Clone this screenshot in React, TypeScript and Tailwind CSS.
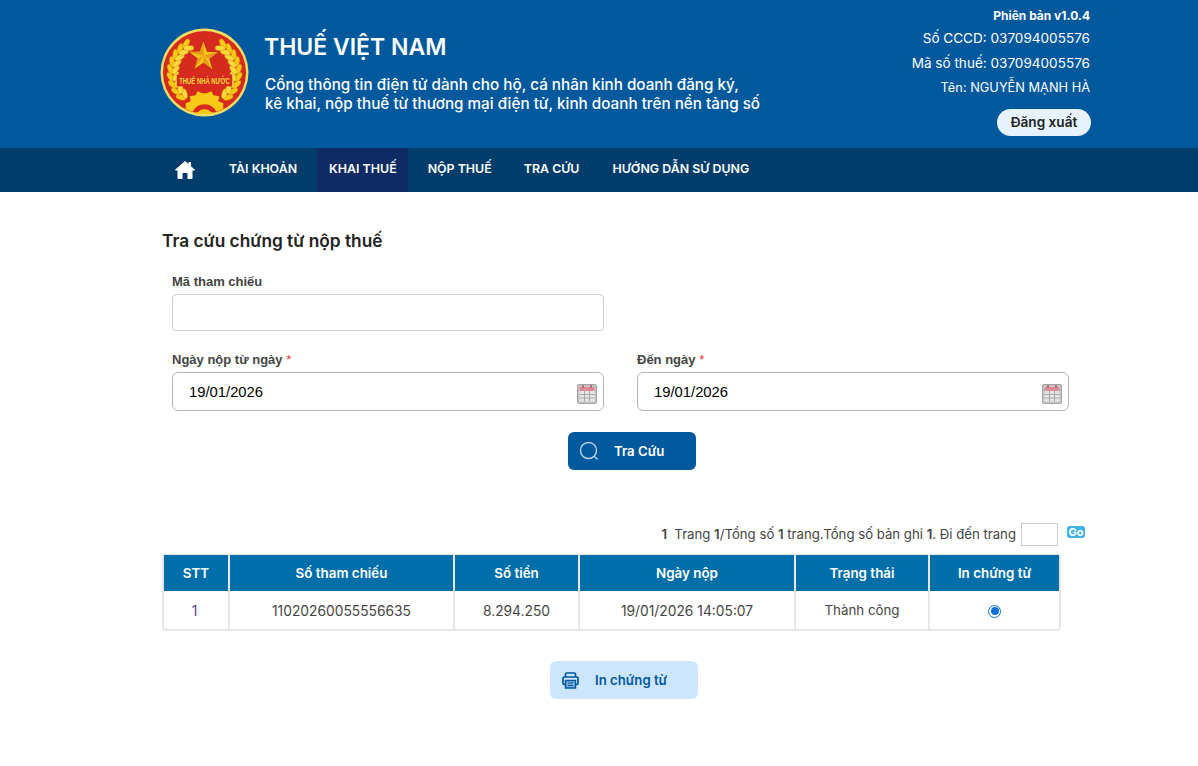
import React from 'react';

// wreath leaves: t is the angle round the emblem, 0 = bottom, 180 = top
const leafAngles = [46, 59, 72, 85, 98, 111, 124, 137, 150];

const WreathSide = () => (
  <g>
    {leafAngles.map((t) => {
      const rad = (t * Math.PI) / 180;
      const x = 45 - 32 * Math.sin(rad);
      const y = 45 + 32 * Math.cos(rad);
      const r = t - 90;
      return (
        <g key={t}>
          <ellipse cx={x} cy={y} rx="2.600" ry="5.200" fill="#f6c915" stroke="#c98a12" strokeWidth="0.4" transform={`rotate(${r - 28} ${x} ${y}) translate(-3 0)`} />
          <ellipse cx={x} cy={y} rx="2.600" ry="5.200" fill="#f9d93a" stroke="#c98a12" strokeWidth="0.4" transform={`rotate(${r + 28} ${x} ${y}) translate(3 0)`} />
        </g>
      );
    })}
  </g>
);

const Emblem = () => (
  <svg width="89" height="89" viewBox="0 0 90 90" className="shrink-0">
    <circle cx="45" cy="45" r="44.500" fill="#f3dc62" />
    <circle cx="45" cy="45" r="42" fill="#d62a1e" />
    <WreathSide />
    <g transform="translate(90 0) scale(-1 1)">
      <WreathSide />
    </g>
    <path d="M44 13 L47.800 23.700 L59.200 24.100 L50.200 31 L53.400 41.900 L44 35.500 L34.600 41.900 L37.800 31 L28.800 24.100 L40.200 23.700 Z" fill="#f6c518" stroke="#b51f17" strokeWidth="0.7" />
    <path d="M44 13 L44 28 L28.800 24.100 L40.200 23.700 Z M44 28 L59.200 24.100 L50.200 31 Z M44 28 L53.400 41.900 L44 35.500 Z M44 28 L34.600 41.900 L37.800 31 Z" fill="#e59a17" />
    <rect x="17" y="47" width="56" height="12" fill="#d62a1e" />
    <text textAnchor="middle" fontSize="8.800" fontWeight="700" fill="#f8d83a" fontFamily="Liberation Sans, sans-serif" transform="translate(45 56.500) scale(0.68 1)">THUẾ NHÀ NƯỚC</text>
    <path d="M26 82 L26 76 L31 74 L30 69 L36 68 L38 64 L43 66 L47 66 L52 64 L54 68 L60 69 L59 74 L64 76 L64 82 A44 44 0 0 1 26 82 Z" fill="#f6c915" />
    <path d="M33 85 A13 13 0 0 1 57 85 Z" fill="#d62a1e" />
    <path d="M37 87 A9 9 0 0 1 53 87 Z" fill="#f6c915" />
  </svg>
);

const HomeIcon = () => (
  <svg width="20" height="18" viewBox="0 0 20 18" fill="white">
    <path d="M10 0 L13.500 3 V1 H16 V5.200 L20 8.800 Q20 9.600 19 9.600 H17.500 V17 Q17.500 18 16.500 18 H12.500 V12 H7.500 V18 H3.500 Q2.500 18 2.500 17 V9.600 H1 Q0 9.600 0 8.800 Z" />
  </svg>
);

const Calendar = () => (
  <svg width="20" height="20" viewBox="0 0 20 20" className="mt-[4px] shrink-0">
    <rect x="0.500" y="0.500" width="19" height="19" rx="1.500" fill="#c4c4c4" stroke="#a3a3a3" />
    <rect x="2.500" y="3" width="15" height="4" fill="#dd8b98" />
    <rect x="2.500" y="7" width="15" height="10.500" fill="#e6e6e6" />
    <path d="M2.500 10.500h15M2.500 14h15M7.500 7v10.500M12.500 7v10.500" stroke="#a8a8a8" strokeWidth="1" />
    <path d="M6 1v3M14 1v3" stroke="#c2505f" strokeWidth="1.500" />
  </svg>
);

const Printer = () => (
  <svg width="17" height="17" viewBox="0 0 17 17" fill="none" stroke="#00589d" className="shrink-0">
    <path d="M3.500 5V2A1.200 1.200 0 0 1 4.700 1h7.600a1.200 1.200 0 0 1 1.200 1V5" strokeWidth="1.600" />
    <path d="M3.500 12.500H2.200A1.400 1.400 0 0 1 1 11V6.500A1.400 1.400 0 0 1 2.400 5h12.200A1.400 1.400 0 0 1 16 6.500V11a1.400 1.400 0 0 1-1.200 1.500H13.500" strokeWidth="1.700" />
    <rect x="3.500" y="8.500" width="10" height="7.500" strokeWidth="1.500" fill="#7fb2da" />
    <path d="M5.800 11h5.400M5.800 13.500h5.400" strokeWidth="1.200" />
  </svg>
);

const DateField = ({ label }: { label: string }) => (
  <div className="w-[432px]">
    <div className="pt-[1px] text-[13px] leading-[16px] font-bold text-[#444] font-['Liberation_Sans',sans-serif]">
      {label} <span className="text-[#d33] font-normal">*</span>
    </div>
    <div className="mt-[4px] flex h-[39px] items-center justify-between rounded-md border border-[#b5b5b5] pl-[16px] pr-[6px]">
      <span className="pt-[1px] text-[14.800px] text-black font-['Liberation_Sans',sans-serif]">19/01/2026</span>
      <Calendar />
    </div>
  </div>
);

const columns = [
  { title: 'STT', value: '1', w: 'w-[66px]', cell: 'pr-[3px] text-[#5a3f86]' },
  { title: 'Số tham chiếu', value: '11020260055556635', w: 'w-[225px]', cell: 'text-[#444]' },
  { title: 'Số tiền', value: '8.294.250', w: 'w-[125px]', cell: 'text-[#444]' },
  { title: 'Ngày nộp', value: '19/01/2026 14:05:07', w: 'w-[216px]', cell: 'text-[#444]' },
  { title: 'Trạng thái', value: 'Thành công', w: 'w-[134px]', cell: 'text-[13.300px] text-[#444]' },
];

const App: React.FC = () => {
  return (
    <div className="h-[766px] w-[1198px] overflow-hidden bg-white font-['Inter',sans-serif]">
      <header className="h-[148px] bg-[#00589d] text-white">
        <div className="ml-[160px] flex w-[930px] justify-between">
          <div className="flex pt-[28px]">
            <Emblem />
            <div className="ml-[16px]">
              <h1 className="mt-[4px] -ml-[1px] text-[23px] leading-[30px] font-semibold">THUẾ VIỆT NAM</h1>
              <p className="mt-[13px] text-[15.250px] leading-[19px] font-medium">
                Cổng thông tin điện tử dành cho hộ, cá nhân kinh doanh đăng ký,<br />
                kê khai, nộp thuế từ thương mại điện tử, kinh doanh trên nền tảng số
              </p>
            </div>
          </div>
          <div className="flex flex-col items-end pt-[7px] text-[13.550px]">
            <div className="text-[12px] leading-[18px] font-bold">Phiên bản v1.0.4</div>
            <div className="mt-[3px] leading-[20px]">Số CCCD: 037094005576</div>
            <div className="mt-[5px] leading-[20px]">Mã số thuế: 037094005576</div>
            <div className="mt-[5px] text-[12.800px] leading-[20px]">Tên: NGUYỄN MẠNH HÀ</div>
            <button className="mt-[11px] -mr-[1px] h-[27px] w-[94px] rounded-full bg-[#e6f2fd] text-[13.600px] font-semibold text-[#222]">Đăng xuất</button>
          </div>
        </div>
      </header>

      <nav className="flex h-[44px] items-center bg-[#003d6b] pl-[162px] text-[12.400px] font-semibold text-white">
        <div className="flex h-full w-[55px] items-center pb-[1px] pl-[13px]">
          <HomeIcon />
        </div>
        <div className="flex h-full items-center px-[12px] pb-[1px]">TÀI KHOẢN</div>
        <div className="ml-[8px] flex h-full items-center bg-[#0e2c63] pl-[12px] pr-[11px] pb-[1px]">KHAI THUẾ</div>
        <div className="ml-[8px] flex h-full items-center px-[12px] pb-[1px]">NỘP THUẾ</div>
        <div className="ml-[8px] flex h-full items-center px-[12px] pb-[1px]">TRA CỨU</div>
        <div className="ml-[9px] flex h-full items-center px-[12px] pb-[1px]">HƯỚNG DẪN SỬ DỤNG</div>
      </nav>

      <main className="pl-[162px]">
        <h2 className="mt-[38px] text-[17.300px] leading-[22px] font-semibold text-[#222]">Tra cứu chứng từ nộp thuế</h2>

        <div className="ml-[10px]">
          <div className="mt-[22px] text-[13px] leading-[16px] font-bold text-[#444] font-['Liberation_Sans',sans-serif]">Mã tham chiếu</div>
          <div className="mt-[4px] h-[37px] w-[432px] rounded-[4px] border border-[#cfcfcf]" />

          <div className="mt-[20px] flex gap-[33px]">
            <DateField label="Ngày nộp từ ngày" />
            <DateField label="Đến ngày" />
          </div>
        </div>

        <button className="mt-[21px] ml-[406px] flex h-[38px] w-[128px] items-center rounded-md bg-[#00589d] pl-[11px] text-[13.200px] font-semibold text-white">
          <svg width="20" height="20" viewBox="0 0 20 20" fill="none" stroke="#b9d4ea" strokeWidth="1.400">
            <circle cx="9.500" cy="9.500" r="8" />
            <path d="M15.500 15.500l3 3" />
          </svg>
          <span className="ml-[15px] pt-[1px]">Tra Cứu</span>
        </button>

        <div className="mt-[53px] flex h-[23px] w-[923px] items-center text-[13.200px] text-[#444]">
          <div className="ml-auto">
            <b className="font-semibold">1</b>&nbsp; Trang <b className="font-semibold">1</b>/Tổng số <b className="font-semibold">1</b> trang.Tổng số bản ghi <b className="font-semibold">1</b>. Đi đến trang
          </div>
          <div className="ml-[5px] h-[23px] w-[37px] border border-[#ccc]" />
          <div className="mb-[5px] ml-[9px] flex h-[12px] w-[18px] items-center justify-center rounded-[3px] bg-[#3fb4e0] text-[11px] leading-none font-bold text-white">Go</div>
        </div>

        <div className="mt-[8px] flex w-[899px] rounded-[4px] border-2 border-t-1 border-[#e6e6e6] text-[13.800px]">
          {columns.map((c) => (
            <div key={c.title} className={`${c.w} border-r-2 border-[#e6e6e6]`}>
              <div className="flex h-[36px] items-center justify-center bg-[#006ea8] text-[13.400px] font-semibold text-white">{c.title}</div>
              <div className={`flex h-[38px] items-center justify-center pt-[2px] ${c.cell}`}>{c.value}</div>
            </div>
          ))}
          <div className="flex-1">
            <div className="flex h-[36px] items-center justify-center bg-[#006ea8] text-[13.400px] font-semibold text-white">In chứng từ</div>
            <div className="flex h-[38px] items-center justify-center pt-[2px]">
              <span className="flex h-[13px] w-[13px] items-center justify-center rounded-full border border-[#0f6fd6]">
                <span className="h-[8px] w-[8px] rounded-full bg-[#0f6fd6]" />
              </span>
            </div>
          </div>
        </div>

        <button className="mt-[30px] ml-[388px] flex h-[38px] w-[148px] items-center rounded-md bg-[#cce6ff] pl-[12px] text-[13.200px] font-semibold text-[#00589d]">
          <Printer />
          <span className="ml-[16px] pt-[1px]">In chứng từ</span>
        </button>
      </main>
    </div>
  );
};

export default App;
